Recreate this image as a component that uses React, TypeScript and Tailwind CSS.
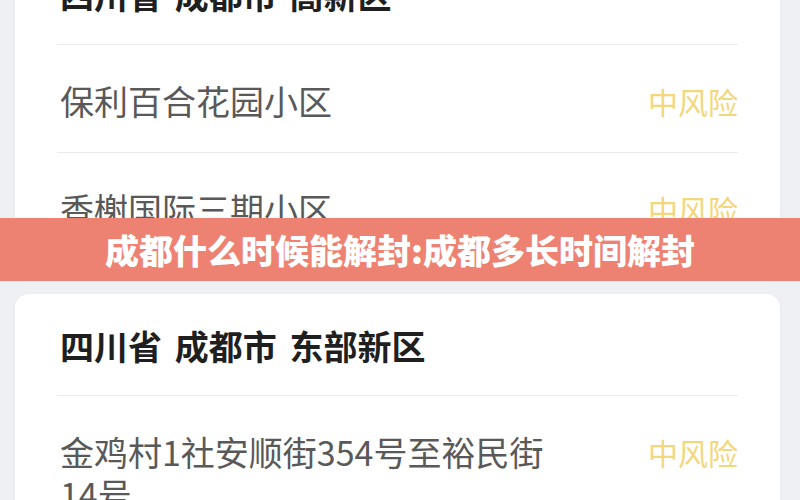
import React from "react";

interface Area {
  region: string;
  places: { name: string; level: string }[];
}

const areas: Area[] = [
  {
    region: "四川省 成都市 高新区",
    places: [
      { name: "保利百合花园小区", level: "中风险" },
      { name: "香榭国际三期小区", level: "中风险" },
    ],
  },
  {
    region: "四川省 成都市 东部新区",
    places: [{ name: "金鸡村1社安顺街354号至裕民街14号", level: "中风险" }],
  },
];

const font = { fontFamily: '"Noto Sans CJK SC", "Noto Sans", sans-serif' };

const AreaCard: React.FC<{ area: Area; className?: string }> = ({ area, className }) => (
  <div
    className={`ml-[15px] mr-[20px] rounded-[14px] bg-white pl-[42px] pr-[42px] pb-[18px] shadow-[0_1px_4px_rgba(0,0,0,0.04)] ${
      className ?? ""
    }`}
  >
    <div className="border-b border-[#ebebeb] pt-[31px] pb-[28px] pl-[3px]">
      <h2 className="text-[34px] leading-[42px] font-bold text-[#1f1f1f] [word-spacing:5px]">{area.region}</h2>
    </div>
    {area.places.map((p, i) => (
      <div
        key={p.name}
        className={`flex items-start justify-between pt-[35px] pb-[30px] pl-[3px] ${
          i < area.places.length - 1 ? "border-b border-[#ebebeb]" : ""
        }`}
      >
        <span className="w-[510px] text-[34px] leading-[42px] text-[#595959]">{p.name}</span>
        <span className="text-[30px] leading-[42px] text-[#f3d77c]">{p.level}</span>
      </div>
    ))}
  </div>
);

export default function App() {
  return (
    <div className="relative h-[500px] w-[800px] overflow-hidden bg-[#eef0f3]" style={font}>
      <AreaCard area={areas[0]} className="-mt-[57px]" />
      <AreaCard area={areas[1]} className="mt-[16px]" />

      {/* title banner over the screenshot */}
      <div className="absolute left-0 right-0 top-[218px] flex h-[63px] items-center justify-center bg-[#ee8272]">
        <h1 className="text-[34px] leading-none font-black text-white">成都什么时候能解封:成都多长时间解封</h1>
      </div>
    </div>
  );
}
